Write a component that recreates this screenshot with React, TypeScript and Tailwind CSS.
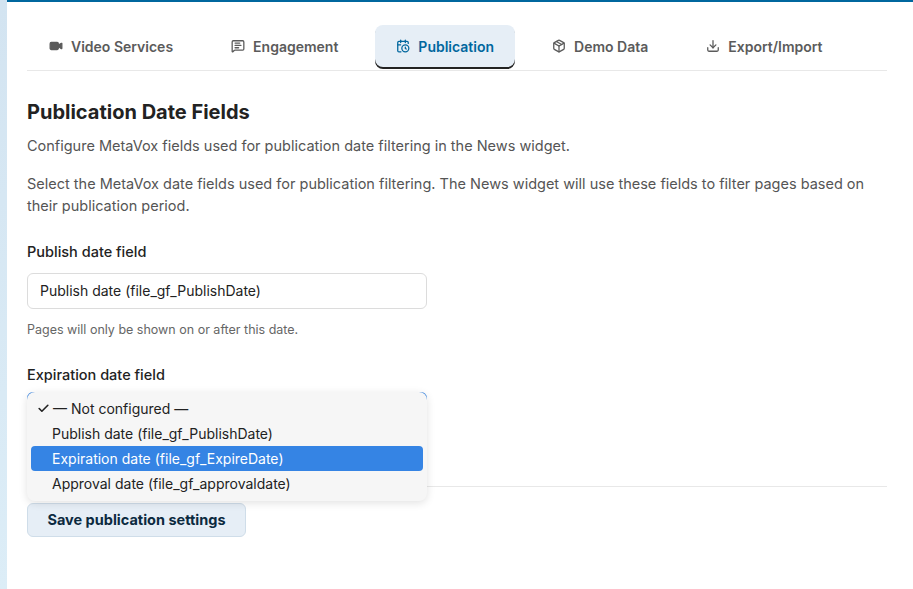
import React from 'react';
import { Video, MessageSquareText, CalendarClock, Package, Download, Check } from 'lucide-react';

const tabs = [
  { label: 'Video Services', icon: Video, fill: true },
  { label: 'Engagement', icon: MessageSquareText },
  { label: 'Publication', icon: CalendarClock, active: true },
  { label: 'Demo Data', icon: Package },
  { label: 'Export/Import', icon: Download },
];

export default function App() {
  return (
    <div className="h-[589px] w-[913px] flex bg-white overflow-hidden" style={{ fontFamily: 'Inter, "Noto Sans", sans-serif' }}>
      <div className="w-[7px] bg-gradient-to-b from-[#d3e4f1] to-[#dcedf7] shrink-0" />
      <div className="flex-1 flex flex-col border-t-2 border-[#00679e]">
        <div className="pl-5 pr-[26px]">
          <div className="mt-[23px] flex border-b border-[#e8e8e8] pb-[3px] pl-[1px]">
            {tabs.map(t => {
              const Icon = t.icon;
              return (
                <div
                  key={t.label}
                  className={`h-[42px] flex items-center gap-2 px-[21px] mr-[16px] rounded-lg text-[14px] font-semibold ${t.active ? 'bg-[#e6eef6] text-[#00679e] shadow-[0_2px_0_#222]' : 'text-[#5b5b5b]'}`}
                >
                  <Icon size={14} strokeWidth={2.2} className={t.fill ? 'fill-current' : ''} />
                  {t.label}
                </div>
              );
            })}
          </div>

          <h2 className="mt-[26px] text-[20px] font-bold text-[#222]">Publication Date Fields</h2>
          <p className="mt-[8px] text-[14.5px] text-[#555]">Configure MetaVox fields used for publication date filtering in the News widget.</p>
          <p className="mt-[16px] text-[14.5px] leading-[22px] text-[#555]">
            Select the MetaVox date fields used for publication filtering. The News widget will use these fields to filter pages based on their publication period.
          </p>

          <div className="mt-[24px] text-[14.5px] font-medium text-[#222]">Publish date field</div>
          <div className="mt-[10px] w-[400px] h-[36px] border border-[#dcdcdc] rounded-md flex items-center px-3 text-[14px] text-[#222]">
            Publish date (file_gf_PublishDate)
          </div>
          <div className="mt-[12px] text-[12.5px] text-[#666]">Pages will only be shown on or after this date.</div>

          <div className="mt-[25px] text-[14.5px] font-medium text-[#222]">Expiration date field</div>
          <div className="relative mt-[6px]">
            <div className="w-[400px] h-[36px] border-2 border-[#3584e4] rounded-md" />
            <div className="mt-[58px] border-t border-[#e8e8e8]" />
            <div className="absolute left-0 top-0 w-[400px] h-[109px] rounded-lg bg-[#f6f6f6] shadow-[0_2px_8px_rgba(0,0,0,0.12)] py-[4px] px-[4px] text-[14px] text-[#222]">
              <div className="h-[25px] flex items-center pl-[6px] gap-[3px]">
                <Check size={13} strokeWidth={3} />— Not configured —
              </div>
              <div className="h-[25px] flex items-center pl-[21px]">Publish date (file_gf_PublishDate)</div>
              <div className="h-[25px] flex items-center pl-[21px] bg-[#3584e4] text-white rounded">Expiration date (file_gf_ExpireDate)</div>
              <div className="h-[25px] flex items-center pl-[21px]">Approval date (file_gf_approvaldate)</div>
            </div>
          </div>

          <button className="mt-[16px] h-[34px] w-[219px] rounded-md bg-[#e6eef6] border border-[#cfdde9] text-[14.5px] font-bold text-[#0b2a3f]">
            Save publication settings
          </button>
        </div>
      </div>
    </div>
  );
}
